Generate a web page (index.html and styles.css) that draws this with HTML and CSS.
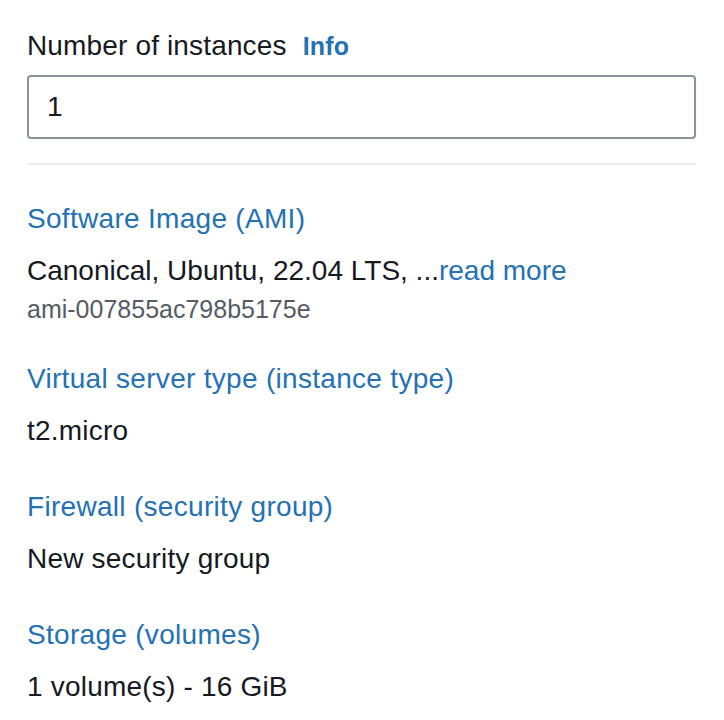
FILE: index.html
```html
<!DOCTYPE html>
<html lang="en">
<head>
<meta charset="utf-8">
<title>Summary</title>
<link rel="stylesheet" href="styles.css">
</head>
<body>
<div class="panel">
  <div class="field">
    <label class="label" for="count">Number of instances<a class="info" href="#">Info</a></label>
    <input id="count" class="input" type="text" value="1">
  </div>
  <div class="divider"></div>
  <div class="sections">
    <div class="kv">
      <a class="key" href="#">Software Image (AMI)</a>
      <div class="value">
        <div class="tight">Canonical, Ubuntu, 22.04 LTS, ...<a class="more" href="#">read more</a></div>
        <div class="sub">ami-007855ac798b5175e</div>
      </div>
    </div>
    <div class="kv">
      <a class="key" href="#">Virtual server type (instance type)</a>
      <div class="value">t2.micro</div>
    </div>
    <div class="kv">
      <a class="key" href="#">Firewall (security group)</a>
      <div class="value">New security group</div>
    </div>
    <div class="kv">
      <a class="key" href="#">Storage (volumes)</a>
      <div class="value">1 volume(s) - 16 GiB</div>
    </div>
  </div>
</div>
</body>
</html>
```
FILE: styles.css
```css
html, body {
  margin: 0;
  padding: 0;
  background: #ffffff;
}

body {
  font-family: "Liberation Sans", Arial, sans-serif;
  font-size: 28px;
  line-height: 44px;
  color: #16191f;
  letter-spacing: 0.2px;
}

.panel {
  padding: 24px 28px 0 27px;
  display: flex;
  flex-direction: column;
}

.field {
  display: flex;
  flex-direction: column;
  gap: 7px;
}

.label {
  display: block;
  height: 44px;
  color: #16191f;
  letter-spacing: 0.15px;
}

.info {
  margin-left: 16px;
  font-size: 25px;
  font-weight: bold;
  color: #2471b5;
  text-decoration: none;
  letter-spacing: 0.2px;
}

.input {
  box-sizing: border-box;
  width: 100%;
  height: 64px;
  margin: 0;
  padding: 0 18px;
  border: 2px solid #879596;
  border-radius: 4px;
  font-family: inherit;
  font-size: 28px;
  color: #16191f;
  background: #ffffff;
  outline: none;
}

.divider {
  margin-top: 24px;
  height: 2px;
  background: #eaeded;
}

.sections {
  padding-top: 32px;
  display: flex;
  flex-direction: column;
  gap: 32px;
}

.kv {
  display: flex;
  flex-direction: column;
  gap: 8px;
}

.key {
  color: #2471b5;
  text-decoration: none;
  letter-spacing: 0.3px;
}

.tight {
  letter-spacing: 0;
}

.more {
  color: #2471b5;
  text-decoration: none;
}

.sub {
  font-size: 25px;
  line-height: 32px;
  color: #545b64;
  letter-spacing: 0;
}
```
